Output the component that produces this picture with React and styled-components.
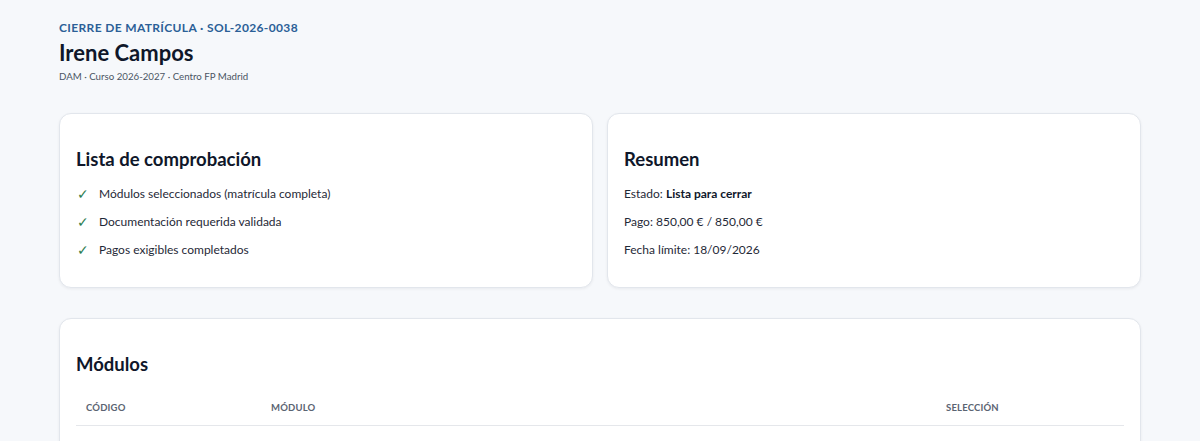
import React from "react";
import styled, { createGlobalStyle } from "styled-components";

const GlobalStyle = createGlobalStyle`
  body {
    margin: 0;
    background: #f6f8fb;
    font-family: Lato, "Noto Sans", sans-serif;
    color: #1f2937;
  }
`;

const checklist = [
  "Módulos seleccionados (matrícula completa)",
  "Documentación requerida validada",
  "Pagos exigibles completados",
];

const modules = [
  { code: "0373", name: "Lenguajes de marcas y sistemas de gestión de información", selection: "Incluido" },
  { code: "0483", name: "Sistemas informáticos", selection: "Incluido" },
];

const App = () => {
  return (
    <>
      <GlobalStyle />
      <Page>
        <Header>
          <Eyebrow>Cierre de matrícula · SOL-2026-0038</Eyebrow>
          <Title>Irene Campos</Title>
          <Meta>DAM · Curso 2026-2027 · Centro FP Madrid</Meta>
        </Header>

        <TopGrid>
          <Card>
            <CardTitle>Lista de comprobación</CardTitle>
            <CheckList>
              {checklist.map((item) => (
                <CheckItem key={item}>
                  <Tick>✓</Tick>
                  {item}
                </CheckItem>
              ))}
            </CheckList>
          </Card>
          <Card>
            <CardTitle>Resumen</CardTitle>
            <Summary>
              <Line>
                Estado: <strong>Lista para cerrar</strong>
              </Line>
              <Line>Pago: 850,00 € / 850,00 €</Line>
              <Line>Fecha límite: 18/09/2026</Line>
            </Summary>
          </Card>
        </TopGrid>

        <Card>
          <CardTitle>Módulos</CardTitle>
          <Table>
            <thead>
              <tr>
                <Th $width="185px">Código</Th>
                <Th>Módulo</Th>
                <Th $width="188px">Selección</Th>
              </tr>
            </thead>
            <tbody>
              {modules.map((m) => (
                <tr key={m.code}>
                  <Td>{m.code}</Td>
                  <Td>{m.name}</Td>
                  <Td>{m.selection}</Td>
                </tr>
              ))}
            </tbody>
          </Table>
        </Card>
      </Page>
    </>
  );
};

const Page = styled.main`
  max-width: 1082px;
  margin: 0 auto;
  padding: 19px 0 40px;
  display: flex;
  flex-direction: column;
  gap: 30px;
`;

const Header = styled.header`
  display: flex;
  flex-direction: column;
`;

const Eyebrow = styled.div`
  font-size: 12px;
  font-weight: 700;
  letter-spacing: 0.03em;
  text-transform: uppercase;
  color: #2b5f97;
  line-height: 18px;
`;

const Title = styled.h1`
  margin: 2px 0 0;
  font-size: 22px;
  font-weight: 700;
  color: #0f172a;
  line-height: 28px;
`;

const Meta = styled.div`
  margin-top: 2px;
  font-size: 9.7px;
  color: #4b5563;
  line-height: 14px;
`;

const TopGrid = styled.div`
  display: grid;
  grid-template-columns: 1fr 1fr;
  gap: 14px;
`;

const Card = styled.section`
  background: #ffffff;
  border: 1px solid #e2e6ec;
  border-radius: 12px;
  box-shadow: 0 1px 3px rgba(15, 23, 42, 0.06);
  padding: 16px;
`;

const CardTitle = styled.h2`
  margin: 17px 0 9px;
  font-size: 18.5px;
  font-weight: 700;
  color: #0f172a;
  line-height: 24px;
`;

const CheckList = styled.ul`
  list-style: none;
  margin: 0 0 7px;
  padding: 0;
`;

const CheckItem = styled.li`
  display: flex;
  align-items: center;
  gap: 10px;
  font-size: 12px;
  line-height: 16px;
  color: #1f2937;
  padding: 6px 0;
`;

const Tick = styled.span`
  color: #2e7d4f;
  font-size: 14px;
  font-weight: 400;
  width: 13px;
  text-align: center;
`;

const Summary = styled.div`
  margin-bottom: 7px;
`;

const Line = styled.p`
  margin: 0;
  font-size: 12px;
  line-height: 16px;
  padding: 6px 0;
  color: #1f2937;

  strong {
    color: #0f172a;
  }
`;

const Table = styled.table`
  width: 100%;
  border-collapse: collapse;
  margin-top: 20px;
`;

const Th = styled.th`
  box-sizing: border-box;
  width: ${(p) => p.$width || "auto"};
  text-align: left;
  padding: 6px 10px 12px;
  font-size: 9.5px;
  font-weight: 700;
  letter-spacing: 0.02em;
  text-transform: uppercase;
  color: #5b6472;
  border-bottom: 1px solid #e5e7eb;
`;

const Td = styled.td`
  padding: 14px 10px;
  font-size: 12px;
  color: #1f2937;
  border-bottom: 1px solid #eef0f3;
`;

export default App;
